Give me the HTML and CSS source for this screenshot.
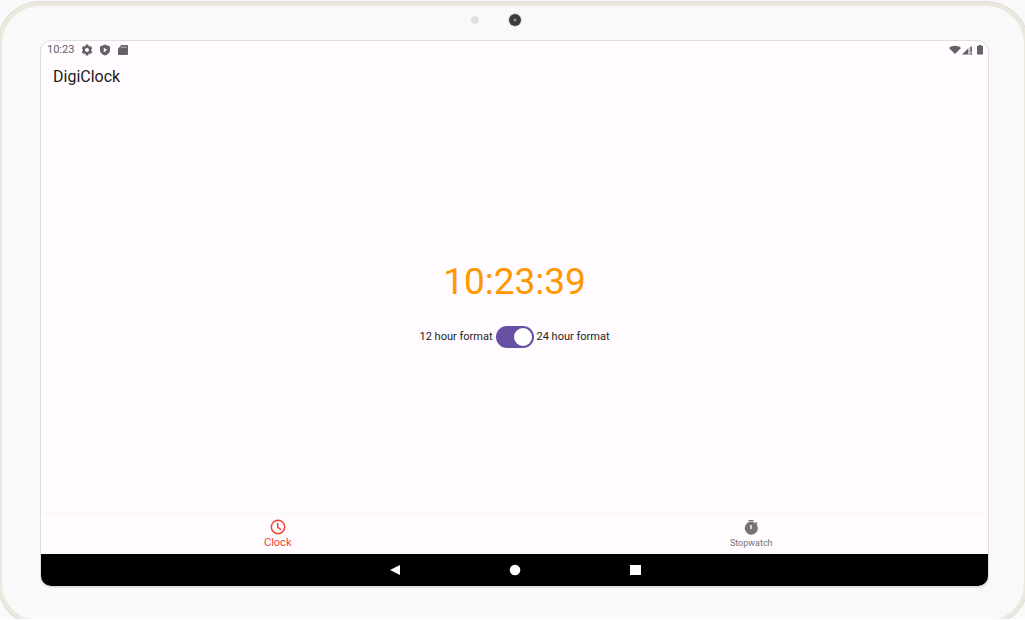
FILE: index.html
```html
<!DOCTYPE html>
<html lang="en">
<head>
<meta charset="utf-8">
<meta name="viewport" content="width=device-width, initial-scale=1">
<title>DigiClock</title>
<link rel="stylesheet" href="styles.css">
</head>
<body>
<div class="stage">
  <div class="tablet">
    <div class="bezel-top">
      <span class="sensor"></span>
      <span class="camera"></span>
      <span class="sensor-space"></span>
    </div>
    <div class="screen">
      <header class="status-bar">
        <span class="status-time">10:23</span>
        <svg class="status-icon" viewBox="0 0 24 24" aria-hidden="true"><path fill-rule="evenodd" d="M20.500 13.500v-3l2-1.600-2.700-4.700-2.500 1-2.300-1.400L14.600 1H9.400L9 3.800 6.700 5.200l-2.500-1L1.500 8.900l2 1.600v3l-2 1.600 2.700 4.700 2.500-1L9 20.200l.4 2.800h5.200l.4-2.800 2.300-1.400 2.500 1 2.700-4.700zM12 16a4 4 0 1 1 0-8 4 4 0 0 1 0 8z"/></svg>
        <svg class="status-icon" viewBox="0 0 24 24" aria-hidden="true"><path fill-rule="evenodd" d="M12 1 2 5v7c0 5.500 4.300 9.700 10 11 5.700-1.300 10-5.500 10-11V5zM9.500 7.500l7 4.500-7 4.500z"/></svg>
        <svg class="status-icon" viewBox="0 0 24 24" aria-hidden="true"><path fill-rule="evenodd" d="M9 2h11a2 2 0 0 1 2 2v16a2 2 0 0 1-2 2H4a2 2 0 0 1-2-2V9zM9 5v3h1.500V5zm4 0v3h1.500V5zm4 0v3h1.500V5z"/></svg>
        <span class="status-signals">
          <svg class="wifi" viewBox="0 0 12 10" aria-hidden="true"><path d="M0 3C3 0 9 0 12 3L6 9z"/></svg>
          <svg class="cell" viewBox="0 0 10 10" aria-hidden="true"><path class="cell-faint" d="M10 0v10H6V4z"/><path d="M0 9.500 6 3.500v6zM8.500 2H10v5H8.500zM8.500 8H10v1.500H8.500z"/></svg>
          <svg class="battery" viewBox="0 0 6 10" aria-hidden="true"><path d="M1.500 0h3v1H6v8.500H0V1h1.500z"/></svg>
        </span>
      </header>
      <div class="app-bar"><h1 class="app-title">DigiClock</h1></div>
      <main class="clock">
        <time class="clock-time">10:23:39</time>
        <div class="format">
          <span>12 hour format</span>
          <input class="switch" type="checkbox" role="switch" id="format" checked>
          <label for="format">24 hour format</label>
        </div>
      </main>
      <nav class="tabs">
        <button class="tab tab-active" type="button" aria-current="page">
          <svg class="tab-icon" viewBox="0 0 16 16" aria-hidden="true"><circle class="stroke" cx="8" cy="8" r="6.700"/><path class="stroke" d="M7.700 4v4.300l3.300 2.400"/></svg>
          <span>Clock</span>
        </button>
        <button class="tab" type="button">
          <svg class="tab-icon" viewBox="0 0 16 16" aria-hidden="true"><path fill-rule="evenodd" d="M5.500 1h5v1.300h-5zM13.300 3l1.200 1.200-1 1.100A6.500 6.500 0 1 1 12.200 4zM7.300 6v4h1.400V6z"/></svg>
          <span>Stopwatch</span>
        </button>
      </nav>
      <div class="system-bar">
        <button class="system-button" type="button" aria-label="Back"><svg class="system-icon" viewBox="0 0 12 12" aria-hidden="true"><path d="M11 1v10L1 6z"/></svg></button>
        <button class="system-button" type="button" aria-label="Home"><svg class="system-icon" viewBox="0 0 12 12" aria-hidden="true"><circle cx="6" cy="6" r="5.300"/></svg></button>
        <button class="system-button" type="button" aria-label="Recent apps"><svg class="system-icon" viewBox="0 0 12 12" aria-hidden="true"><path d="M1 1h11v10H1z"/></svg></button>
      </div>
    </div>
  </div>
</div>
</body>
</html>
```
FILE: styles.css
```css
* {
  box-sizing: border-box;
}

body {
  margin: 0;
  background: #fff;
  font-family: Roboto, "Liberation Sans", sans-serif;
  color: #1d1b20;
}

button {
  border: 0;
  padding: 0;
  background: none;
  color: inherit;
  font: inherit;
}

.stage {
  display: flex;
  height: calc(100vh - 1px);
  padding-top: 2px;
  background: #f9f9f9;
  overflow: hidden;
}

/* The shell runs slightly past the sides and bottom of the stage. */
.tablet {
  flex: 1;
  display: flex;
  flex-direction: column;
  margin: 0 -3px -6px -2px;
  padding: 0 35px 34px 38px;
  border: 4px solid #ede8dd;
  border-radius: 42px;
  background: #f9f9f9;
  box-shadow: 0 0 0 1px #dcdcdc;
}

.bezel-top {
  display: flex;
  align-items: center;
  justify-content: center;
  gap: 30px;
  height: 34px;
  padding-bottom: 6px;
}

.sensor,
.sensor-space {
  width: 8px;
  height: 8px;
  border-radius: 50%;
}

.sensor {
  background: #e0e0e0;
}

.camera {
  width: 12px;
  height: 12px;
  border-radius: 50%;
  background: radial-gradient(circle, #8a8a8a 0 1px, #3a3a3a 2px);
  box-shadow: 0 0 0 1px #dcdcda;
}

.screen {
  flex: 1;
  display: flex;
  flex-direction: column;
  border: 1px solid #dedee0;
  border-radius: 11px;
  background: #fffbff;
  box-shadow: 0 1px 0 #e6e6e6;
  overflow: hidden;
}

.status-bar {
  display: flex;
  align-items: center;
  gap: 6px;
  height: 17px;
  padding: 0 5px 0 6px;
  font-size: 11px;
  fill: #646166;
  color: #646166;
}

.status-time {
  margin-right: 1px;
}

.status-icon {
  width: 12px;
  height: 12px;
}

.status-signals {
  display: flex;
  align-items: center;
  gap: 1px;
  margin-left: auto;
}

.wifi {
  width: 12px;
  height: 10px;
}

.cell {
  width: 10px;
  height: 10px;
}

.cell-faint {
  fill: #c3c0c4;
}

.battery {
  width: 6px;
  height: 10px;
  margin-left: 4px;
}

.app-bar {
  display: flex;
  align-items: center;
  height: 36px;
  padding: 0 12px;
}

.app-title {
  margin: 0;
  font-size: 16px;
  font-weight: 400;
}

.clock {
  flex: 1;
  display: flex;
  flex-direction: column;
  align-items: center;
  justify-content: center;
  gap: 22px;
}

.clock-time {
  color: #ff9800;
  font-size: 37px;
  line-height: 44px;
}

.format {
  display: flex;
  align-items: center;
  gap: 3px;
  font-size: 11px;
}

.switch {
  display: flex;
  align-items: center;
  appearance: none;
  width: 38px;
  height: 22px;
  margin: 0;
  padding: 0 2px;
  border-radius: 11px;
  background: #79747e;
}

.switch::before {
  content: "";
  width: 18px;
  height: 18px;
  border-radius: 50%;
  background: #fff;
}

.switch:checked {
  justify-content: flex-end;
  background: #6750a4;
}

.tabs {
  display: grid;
  grid-template-columns: 1fr 1fr;
  height: 41px;
  border-top: 1px solid #f8f3f7;
}

.tab {
  display: flex;
  flex-direction: column;
  align-items: center;
  justify-content: center;
  gap: 1px;
  color: #757376;
  fill: currentColor;
  font-size: 9px;
  line-height: 14px;
}

.tab-active {
  color: #f44336;
  font-size: 11px;
}

.tab-icon {
  width: 16px;
  height: 16px;
}

.stroke {
  fill: none;
  stroke: currentColor;
  stroke-width: 1.5;
}

.system-bar {
  display: flex;
  justify-content: center;
  align-items: center;
  gap: 80px;
  height: 32px;
  background: #000;
}

.system-button {
  display: flex;
  align-items: center;
  justify-content: center;
  width: 40px;
  height: 32px;
}

.system-icon {
  width: 12px;
  height: 12px;
  fill: #fff;
}
```
